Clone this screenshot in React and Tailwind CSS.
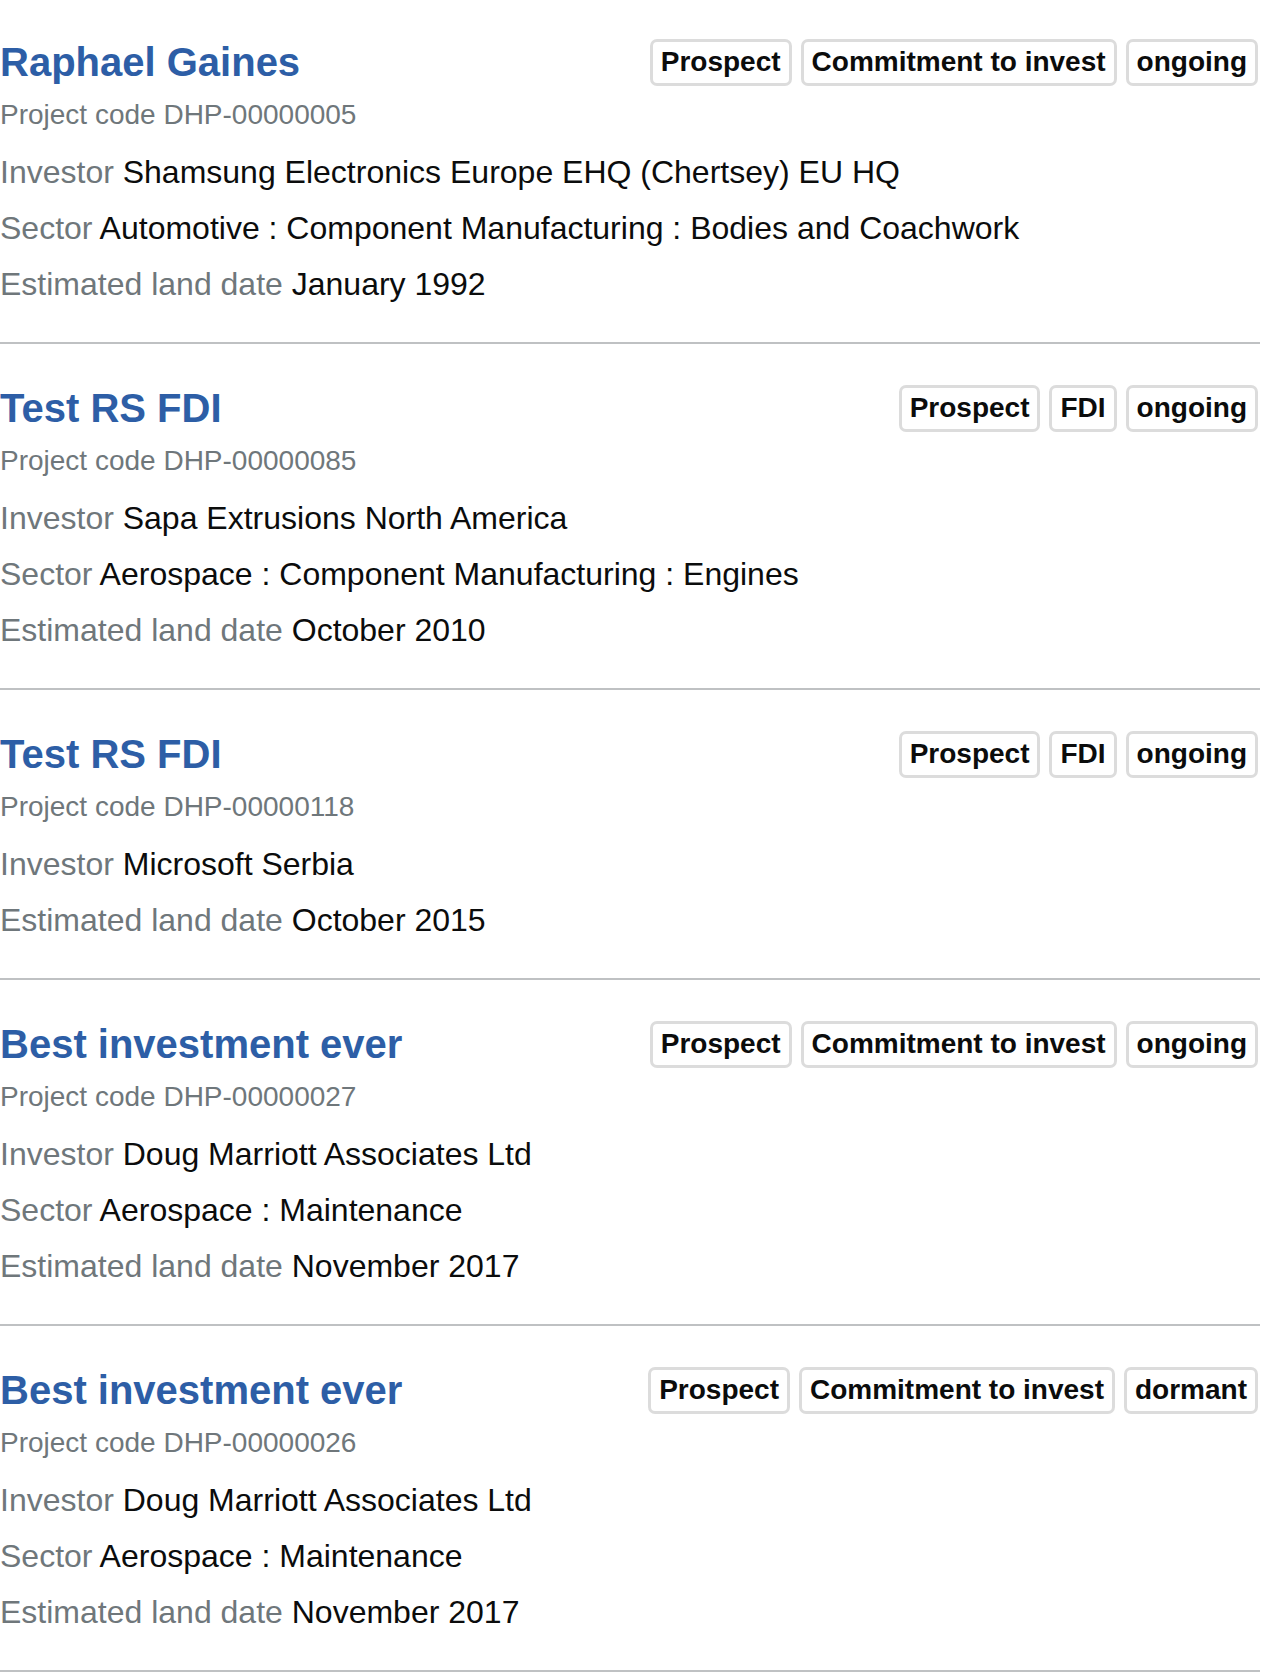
import React from 'react';

const projects = [
    {
        name: 'Raphael Gaines',
        code: 'DHP-00000005',
        badges: ['Prospect', 'Commitment to invest', 'ongoing'],
        investor: 'Shamsung Electronics Europe EHQ (Chertsey) EU HQ',
        sector: 'Automotive : Component Manufacturing : Bodies and Coachwork',
        landDate: 'January 1992'
    },
    {
        name: 'Test RS FDI',
        code: 'DHP-00000085',
        badges: ['Prospect', 'FDI', 'ongoing'],
        investor: 'Sapa Extrusions North America',
        sector: 'Aerospace : Component Manufacturing : Engines',
        landDate: 'October 2010'
    },
    {
        name: 'Test RS FDI',
        code: 'DHP-00000118',
        badges: ['Prospect', 'FDI', 'ongoing'],
        investor: 'Microsoft Serbia',
        landDate: 'October 2015'
    },
    {
        name: 'Best investment ever',
        code: 'DHP-00000027',
        badges: ['Prospect', 'Commitment to invest', 'ongoing'],
        investor: 'Doug Marriott Associates Ltd',
        sector: 'Aerospace : Maintenance',
        landDate: 'November 2017'
    },
    {
        name: 'Best investment ever',
        code: 'DHP-00000026',
        badges: ['Prospect', 'Commitment to invest', 'dormant'],
        investor: 'Doug Marriott Associates Ltd',
        sector: 'Aerospace : Maintenance',
        landDate: 'November 2017'
    }
];

function Badge({ children }) {
    return (
        <span className="h-[47px] flex items-center px-[8px] border-[3px] border-[#dcdcdc] rounded-[7px] text-[28px] font-bold text-[#0b0c0c] leading-none">
            {children}
        </span>
    );
}

function Detail({ label, value }) {
    return (
        <div className="text-[32px] leading-[56px] whitespace-nowrap">
            <span className="text-[#6f777b]">{label}</span>{' '}
            <span className="text-[#0b0c0c]">{value}</span>
        </div>
    );
}

export default function App() {
    return (
        <div className="bg-white min-h-screen font-['Liberation_Sans',Arial,sans-serif]">
            <ul className="w-[1260px]">
                {projects.map((p, i) => (
                    <li key={i} className="pt-[38px] first:pt-[36px] pb-[30px] border-b-2 border-[#bfc1c3]">
                        <div className="flex items-center justify-between h-[52px]">
                            <a href="#" className="text-[40px] font-bold leading-[52px] text-[#2d5ea6]">{p.name}</a>
                            <div className="flex items-center gap-[9px] pr-[2px]">
                                {p.badges.map((b) => (
                                    <Badge key={b}>{b}</Badge>
                                ))}
                            </div>
                        </div>
                        <div className="mt-[9px] text-[28px] leading-[36px] text-[#6f777b]">
                            Project code {p.code}
                        </div>
                        <div className="mt-[11px]">
                            <Detail label="Investor" value={p.investor} />
                            {p.sector && <Detail label="Sector" value={p.sector} />}
                            <Detail label="Estimated land date" value={p.landDate} />
                        </div>
                    </li>
                ))}
            </ul>
        </div>
    );
}
